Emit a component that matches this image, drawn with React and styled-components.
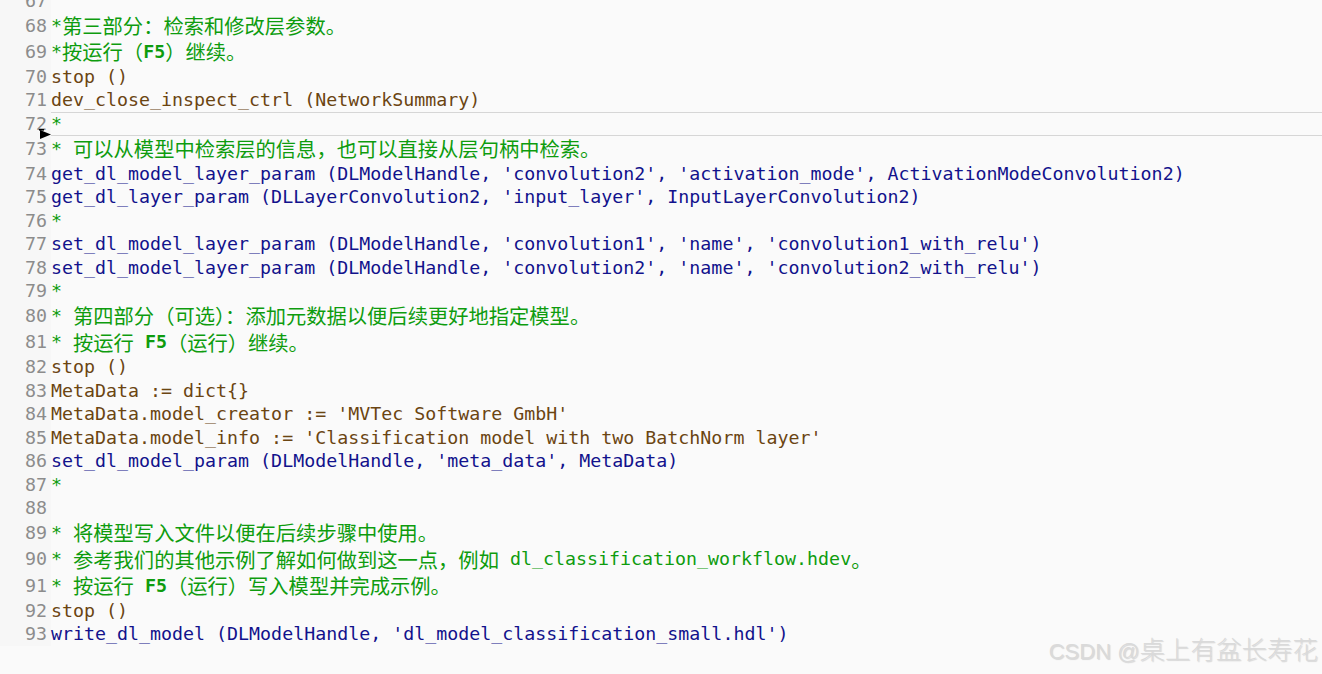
import React from "react";
import styled, { createGlobalStyle } from "styled-components";

const GlobalStyle = createGlobalStyle`
  html, body {
    margin: 0;
    padding: 0;
    background: #fafafa;
    overflow: hidden;
  }
`;

const Page = styled.div`
  position: relative;
  width: 1322px;
  height: 674px;
  overflow: hidden;
  background: #fafafa;
`;

const Editor = styled.div`
  display: flex;
  flex-direction: column;
  margin-top: -11px;
  font-family: "DejaVu Sans Mono", "Liberation Mono", monospace;
  font-size: 18.3px;
  line-height: 1.2;
`;

const Row = styled.div`
  position: relative;
  display: flex;
  height: ${p => (p.$tall ? "26.3px" : "23.5px")};
`;

const Gutter = styled.div`
  width: 47px;
  flex: none;
  padding-right: 4px;
  display: flex;
  align-items: center;
  justify-content: flex-end;
  color: #8c8c8c;
  background: #f7f7f7;
`;

const Code = styled.div`
  flex: 1;
  box-sizing: border-box;
  display: flex;
  align-items: center;
  white-space: pre;
  color: ${p => p.$color};
  border-top: ${p => (p.$current ? "1px solid #d6d6d6" : "none")};
  border-bottom: ${p => (p.$current ? "1px solid #d6d6d6" : "none")};
`;

const Cjk = styled.span`
  font-family: "Noto Sans CJK SC", sans-serif;
  font-size: 20.3px;
  line-height: 1.15;
`;

const Strong = styled.span`
  font-weight: bold;
`;

const Marker = styled.svg`
  position: absolute;
  z-index: 2;
  left: 39px;
  top: 17px;
  display: block;
`;

const Watermark = styled.div`
  position: absolute;
  right: 4px;
  bottom: 9px;
  font-family: "Liberation Sans", Arial, sans-serif;
  font-size: 22px;
  line-height: 1.2;
  color: #dadada;
  text-shadow: 1px 1px 1px rgba(0, 0, 0, 0.14);
  white-space: pre;
`;

const WatermarkCjk = styled.span`
  font-family: "Noto Sans CJK SC", sans-serif;
  font-weight: 300;
  font-size: 25.5px;
  line-height: 1.1;
`;

const COLORS = {
  comment: "#0e9c0e",
  op: "#12128c",
  ctrl: "#6b4512",
  none: "#333",
};

const lines = [
  { n: 67, kind: "none", text: "" },
  { n: 68, kind: "comment", text: "*第三部分：检索和修改层参数。" },
  { n: 69, kind: "comment", text: "*按运行（F5）继续。" },
  { n: 70, kind: "ctrl", text: "stop ()" },
  { n: 71, kind: "ctrl", text: "dev_close_inspect_ctrl (NetworkSummary)" },
  { n: 72, kind: "comment", text: "*", current: true },
  { n: 73, kind: "comment", text: "* 可以从模型中检索层的信息，也可以直接从层句柄中检索。" },
  { n: 74, kind: "op", text: "get_dl_model_layer_param (DLModelHandle, 'convolution2', 'activation_mode', ActivationModeConvolution2)" },
  { n: 75, kind: "op", text: "get_dl_layer_param (DLLayerConvolution2, 'input_layer', InputLayerConvolution2)" },
  { n: 76, kind: "comment", text: "*" },
  { n: 77, kind: "op", text: "set_dl_model_layer_param (DLModelHandle, 'convolution1', 'name', 'convolution1_with_relu')" },
  { n: 78, kind: "op", text: "set_dl_model_layer_param (DLModelHandle, 'convolution2', 'name', 'convolution2_with_relu')" },
  { n: 79, kind: "comment", text: "*" },
  { n: 80, kind: "comment", text: "* 第四部分（可选）：添加元数据以便后续更好地指定模型。" },
  { n: 81, kind: "comment", text: "* 按运行 F5（运行）继续。" },
  { n: 82, kind: "ctrl", text: "stop ()" },
  { n: 83, kind: "ctrl", text: "MetaData := dict{}" },
  { n: 84, kind: "ctrl", text: "MetaData.model_creator := 'MVTec Software GmbH'" },
  { n: 85, kind: "ctrl", text: "MetaData.model_info := 'Classification model with two BatchNorm layer'" },
  { n: 86, kind: "op", text: "set_dl_model_param (DLModelHandle, 'meta_data', MetaData)" },
  { n: 87, kind: "comment", text: "*" },
  { n: 88, kind: "none", text: "" },
  { n: 89, kind: "comment", text: "* 将模型写入文件以便在后续步骤中使用。" },
  { n: 90, kind: "comment", text: "* 参考我们的其他示例了解如何做到这一点，例如 dl_classification_workflow.hdev。" },
  { n: 91, kind: "comment", text: "* 按运行 F5（运行）写入模型并完成示例。" },
  { n: 92, kind: "ctrl", text: "stop ()" },
  { n: 93, kind: "op", text: "write_dl_model (DLModelHandle, 'dl_model_classification_small.hdl')" },
];

const CJK_RE = /([\u3000-\u303f\u4e00-\u9fff\uff00-\uffef]+)/;

// splits a line into cjk runs, bold F5 keys and plain mono text
function renderText(text) {
  return text.split(CJK_RE).flatMap((part, i) => {
    if (!part) return [];
    if (CJK_RE.test(part)) return [<Cjk key={i}>{part}</Cjk>];
    return part.split(/(F5)/).filter(Boolean).map((bit, j) =>
      bit === "F5" ? <Strong key={`${i}-${j}`}>{bit}</Strong> : <span key={`${i}-${j}`}>{bit}</span>
    );
  });
}

function CursorMarker() {
  return (
    <Marker width="13" height="11" viewBox="0 0 13 11">
      <polygon points="1,1 12,5.5 1,10" fill="#000" />
      <rect x="0" y="0" width="5" height="1.6" fill="#000" />
    </Marker>
  );
}

export default function App() {
  return (
    <Page>
      <GlobalStyle />
      <Editor>
        {lines.map(line => (
          <Row key={line.n} $tall={CJK_RE.test(line.text)}>
            <Gutter>{line.n}</Gutter>
            <Code $color={COLORS[line.kind]} $current={line.current}>
              {renderText(line.text)}
            </Code>
            {line.current && <CursorMarker />}
          </Row>
        ))}
      </Editor>
      <Watermark>
        CSDN @<WatermarkCjk>桌上有盆长寿花</WatermarkCjk>
      </Watermark>
    </Page>
  );
}
